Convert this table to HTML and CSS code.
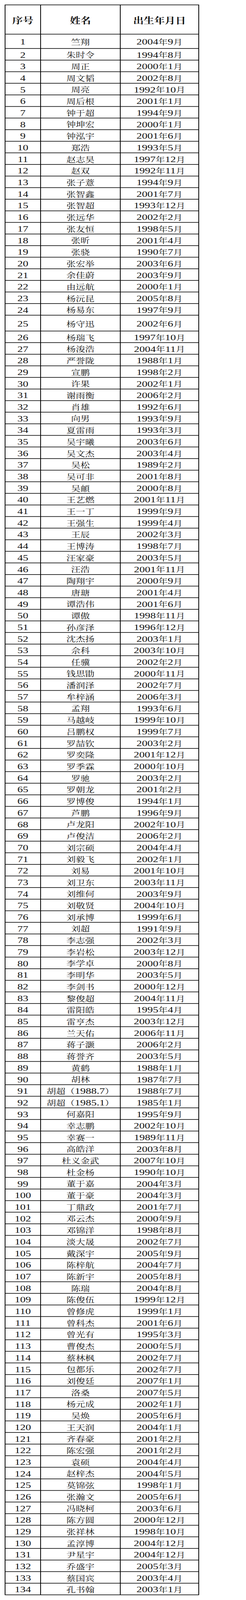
FILE: index.html
```html
<!DOCTYPE html>
<html lang="zh-CN">
<head>
<meta charset="utf-8">
<title>名单</title>
<link rel="stylesheet" href="styles.css">
</head>
<body>
<div class="page">
<div class="canvas">
<div class="sheet">
<div class="row head"><div>序号</div><div>姓名</div><div>出生年月日</div></div>
<div class="row first"><div>1</div><div>竺翔</div><div><span>2004</span>年<span>9</span>月</div></div>
<div class="row"><div>2</div><div>朱时令</div><div><span>1994</span>年<span>8</span>月</div></div>
<div class="row"><div>3</div><div>周正</div><div><span>2000</span>年<span>1</span>月</div></div>
<div class="row"><div>4</div><div>周文韬</div><div><span>2002</span>年<span>8</span>月</div></div>
<div class="row"><div>5</div><div>周亮</div><div><span>1992</span>年<span>10</span>月</div></div>
<div class="row"><div>6</div><div>周后根</div><div><span>2001</span>年<span>1</span>月</div></div>
<div class="row"><div>7</div><div>钟于超</div><div><span>1994</span>年<span>9</span>月</div></div>
<div class="row"><div>8</div><div>钟坤宏</div><div><span>2000</span>年<span>1</span>月</div></div>
<div class="row"><div>9</div><div>钟泓宇</div><div><span>2001</span>年<span>6</span>月</div></div>
<div class="row"><div>10</div><div>郑浩</div><div><span>1993</span>年<span>5</span>月</div></div>
<div class="row"><div>11</div><div>赵志昊</div><div><span>1997</span>年<span>12</span>月</div></div>
<div class="row"><div>12</div><div>赵双</div><div><span>1992</span>年<span>11</span>月</div></div>
<div class="row"><div>13</div><div>张子薏</div><div><span>1994</span>年<span>9</span>月</div></div>
<div class="row"><div>14</div><div>张智鑫</div><div><span>2001</span>年<span>7</span>月</div></div>
<div class="row"><div>15</div><div>张智超</div><div><span>1993</span>年<span>12</span>月</div></div>
<div class="row"><div>16</div><div>张远华</div><div><span>2002</span>年<span>2</span>月</div></div>
<div class="row"><div>17</div><div>张友恒</div><div><span>1998</span>年<span>5</span>月</div></div>
<div class="row"><div>18</div><div>张昕</div><div><span>2001</span>年<span>4</span>月</div></div>
<div class="row"><div>19</div><div>张骁</div><div><span>1990</span>年<span>7</span>月</div></div>
<div class="row"><div>20</div><div>张宏举</div><div><span>2003</span>年<span>6</span>月</div></div>
<div class="row"><div>21</div><div>余佳蔚</div><div><span>2003</span>年<span>9</span>月</div></div>
<div class="row"><div>22</div><div>由远航</div><div><span>2000</span>年<span>1</span>月</div></div>
<div class="row"><div>23</div><div>杨沅昆</div><div><span>2005</span>年<span>8</span>月</div></div>
<div class="row"><div>24</div><div>杨易东</div><div><span>1997</span>年<span>9</span>月</div></div>
<div class="row tall"><div>25</div><div>杨守迅</div><div><span>2002</span>年<span>6</span>月</div></div>
<div class="row"><div>26</div><div>杨瑞飞</div><div><span>1997</span>年<span>10</span>月</div></div>
<div class="row"><div>27</div><div>杨浚浩</div><div><span>2004</span>年<span>11</span>月</div></div>
<div class="row"><div>28</div><div>严誉陇</div><div><span>1988</span>年<span>1</span>月</div></div>
<div class="row"><div>29</div><div>宣鹏</div><div><span>1998</span>年<span>2</span>月</div></div>
<div class="row"><div>30</div><div>许果</div><div><span>2002</span>年<span>1</span>月</div></div>
<div class="row"><div>31</div><div>谢雨衡</div><div><span>2006</span>年<span>2</span>月</div></div>
<div class="row"><div>32</div><div>肖雄</div><div><span>1992</span>年<span>6</span>月</div></div>
<div class="row"><div>33</div><div>向男</div><div><span>1993</span>年<span>9</span>月</div></div>
<div class="row"><div>34</div><div>夏雷雨</div><div><span>1993</span>年<span>3</span>月</div></div>
<div class="row"><div>35</div><div>吴宇曦</div><div><span>2003</span>年<span>6</span>月</div></div>
<div class="row"><div>36</div><div>吴文杰</div><div><span>2003</span>年<span>4</span>月</div></div>
<div class="row"><div>37</div><div>吴松</div><div><span>1989</span>年<span>2</span>月</div></div>
<div class="row"><div>38</div><div>吴可非</div><div><span>2001</span>年<span>8</span>月</div></div>
<div class="row"><div>39</div><div>吴頔</div><div><span>2000</span>年<span>8</span>月</div></div>
<div class="row"><div>40</div><div>王艺燃</div><div><span>2001</span>年<span>11</span>月</div></div>
<div class="row"><div>41</div><div>王一丁</div><div><span>1999</span>年<span>9</span>月</div></div>
<div class="row"><div>42</div><div>王强生</div><div><span>1999</span>年<span>4</span>月</div></div>
<div class="row"><div>43</div><div>王辰</div><div><span>2002</span>年<span>3</span>月</div></div>
<div class="row"><div>44</div><div>王博涛</div><div><span>1998</span>年<span>7</span>月</div></div>
<div class="row"><div>45</div><div>汪家豪</div><div><span>2003</span>年<span>5</span>月</div></div>
<div class="row"><div>46</div><div>汪浩</div><div><span>2001</span>年<span>11</span>月</div></div>
<div class="row"><div>47</div><div>陶翔宇</div><div><span>2000</span>年<span>9</span>月</div></div>
<div class="row"><div>48</div><div>唐瑭</div><div><span>2001</span>年<span>4</span>月</div></div>
<div class="row"><div>49</div><div>谭浩伟</div><div><span>2001</span>年<span>6</span>月</div></div>
<div class="row"><div>50</div><div>谭傲</div><div><span>1998</span>年<span>11</span>月</div></div>
<div class="row"><div>51</div><div>孙彦泽</div><div><span>1996</span>年<span>12</span>月</div></div>
<div class="row"><div>52</div><div>沈杰扬</div><div><span>2003</span>年<span>1</span>月</div></div>
<div class="row"><div>53</div><div>佘科</div><div><span>2003</span>年<span>10</span>月</div></div>
<div class="row"><div>54</div><div>任骥</div><div><span>2002</span>年<span>2</span>月</div></div>
<div class="row"><div>55</div><div>钱思勖</div><div><span>2000</span>年<span>11</span>月</div></div>
<div class="row"><div>56</div><div>潘润泽</div><div><span>2002</span>年<span>7</span>月</div></div>
<div class="row"><div>57</div><div>牟梓涵</div><div><span>2006</span>年<span>3</span>月</div></div>
<div class="row"><div>58</div><div>孟翔</div><div><span>1993</span>年<span>6</span>月</div></div>
<div class="row"><div>59</div><div>马越岐</div><div><span>1999</span>年<span>10</span>月</div></div>
<div class="row"><div>60</div><div>吕鹏权</div><div><span>1999</span>年<span>7</span>月</div></div>
<div class="row"><div>61</div><div>罗喆钦</div><div><span>2003</span>年<span>2</span>月</div></div>
<div class="row"><div>62</div><div>罗奕隆</div><div><span>2001</span>年<span>12</span>月</div></div>
<div class="row"><div>63</div><div>罗季霖</div><div><span>2000</span>年<span>10</span>月</div></div>
<div class="row"><div>64</div><div>罗驰</div><div><span>2003</span>年<span>2</span>月</div></div>
<div class="row"><div>65</div><div>罗朝龙</div><div><span>2001</span>年<span>2</span>月</div></div>
<div class="row"><div>66</div><div>罗博俊</div><div><span>1994</span>年<span>1</span>月</div></div>
<div class="row"><div>67</div><div>芦鹏</div><div><span>1996</span>年<span>9</span>月</div></div>
<div class="row"><div>68</div><div>卢龙阳</div><div><span>2002</span>年<span>10</span>月</div></div>
<div class="row"><div>69</div><div>卢俊洁</div><div><span>2006</span>年<span>2</span>月</div></div>
<div class="row"><div>70</div><div>刘宗硕</div><div><span>2004</span>年<span>4</span>月</div></div>
<div class="row"><div>71</div><div>刘毅飞</div><div><span>2002</span>年<span>1</span>月</div></div>
<div class="row"><div>72</div><div>刘易</div><div><span>2001</span>年<span>10</span>月</div></div>
<div class="row"><div>73</div><div>刘卫东</div><div><span>2003</span>年<span>11</span>月</div></div>
<div class="row"><div>74</div><div>刘维何</div><div><span>2003</span>年<span>9</span>月</div></div>
<div class="row"><div>75</div><div>刘敬贤</div><div><span>2004</span>年<span>10</span>月</div></div>
<div class="row"><div>76</div><div>刘承博</div><div><span>1999</span>年<span>6</span>月</div></div>
<div class="row"><div>77</div><div>刘超</div><div><span>1991</span>年<span>9</span>月</div></div>
<div class="row"><div>78</div><div>李志强</div><div><span>2002</span>年<span>3</span>月</div></div>
<div class="row"><div>79</div><div>李岩松</div><div><span>2003</span>年<span>12</span>月</div></div>
<div class="row"><div>80</div><div>李学卓</div><div><span>2000</span>年<span>8</span>月</div></div>
<div class="row"><div>81</div><div>李明华</div><div><span>2003</span>年<span>5</span>月</div></div>
<div class="row"><div>82</div><div>李剑书</div><div><span>2000</span>年<span>12</span>月</div></div>
<div class="row"><div>83</div><div>黎俊超</div><div><span>2004</span>年<span>11</span>月</div></div>
<div class="row"><div>84</div><div>雷阳皓</div><div><span>1995</span>年<span>4</span>月</div></div>
<div class="row"><div>85</div><div>雷亨杰</div><div><span>2003</span>年<span>12</span>月</div></div>
<div class="row"><div>86</div><div>兰天佑</div><div><span>2006</span>年<span>11</span>月</div></div>
<div class="row"><div>87</div><div>蒋子灏</div><div><span>2006</span>年<span>2</span>月</div></div>
<div class="row"><div>88</div><div>蒋誉齐</div><div><span>2003</span>年<span>5</span>月</div></div>
<div class="row"><div>89</div><div>黄鹤</div><div><span>1988</span>年<span>1</span>月</div></div>
<div class="row"><div>90</div><div>胡林</div><div><span>1987</span>年<span>7</span>月</div></div>
<div class="row"><div>91</div><div>胡超（<span>1988.7</span>）</div><div><span>1988</span>年<span>7</span>月</div></div>
<div class="row"><div>92</div><div>胡超（<span>1985.1</span>）</div><div><span>1985</span>年<span>1</span>月</div></div>
<div class="row"><div>93</div><div>何嘉阳</div><div><span>1995</span>年<span>9</span>月</div></div>
<div class="row"><div>94</div><div>幸志鹏</div><div><span>2002</span>年<span>10</span>月</div></div>
<div class="row"><div>95</div><div>幸赛一</div><div><span>1989</span>年<span>11</span>月</div></div>
<div class="row"><div>96</div><div>高皓洋</div><div><span>2003</span>年<span>8</span>月</div></div>
<div class="row"><div>97</div><div>杜义金武</div><div><span>2007</span>年<span>10</span>月</div></div>
<div class="row"><div>98</div><div>杜金杨</div><div><span>1990</span>年<span>10</span>月</div></div>
<div class="row"><div>99</div><div>董于嘉</div><div><span>2004</span>年<span>3</span>月</div></div>
<div class="row"><div>100</div><div>董于豪</div><div><span>2004</span>年<span>3</span>月</div></div>
<div class="row"><div>101</div><div>丁鼎政</div><div><span>2001</span>年<span>7</span>月</div></div>
<div class="row"><div>102</div><div>邓云杰</div><div><span>2000</span>年<span>9</span>月</div></div>
<div class="row"><div>103</div><div>邓锦洋</div><div><span>1998</span>年<span>8</span>月</div></div>
<div class="row"><div>104</div><div>淡大晟</div><div><span>2002</span>年<span>7</span>月</div></div>
<div class="row"><div>105</div><div>戴深宇</div><div><span>2005</span>年<span>9</span>月</div></div>
<div class="row"><div>106</div><div>陈梓航</div><div><span>2004</span>年<span>7</span>月</div></div>
<div class="row"><div>107</div><div>陈新宇</div><div><span>2005</span>年<span>8</span>月</div></div>
<div class="row"><div>108</div><div>陈瑞</div><div><span>2004</span>年<span>8</span>月</div></div>
<div class="row"><div>109</div><div>陈俊伍</div><div><span>1999</span>年<span>12</span>月</div></div>
<div class="row"><div>110</div><div>曾修虎</div><div><span>1999</span>年<span>1</span>月</div></div>
<div class="row"><div>111</div><div>曾科杰</div><div><span>2001</span>年<span>6</span>月</div></div>
<div class="row"><div>112</div><div>曾光有</div><div><span>1995</span>年<span>3</span>月</div></div>
<div class="row"><div>113</div><div>曹俊杰</div><div><span>2000</span>年<span>5</span>月</div></div>
<div class="row"><div>114</div><div>蔡林枫</div><div><span>2002</span>年<span>7</span>月</div></div>
<div class="row"><div>115</div><div>包都乐</div><div><span>2002</span>年<span>7</span>月</div></div>
<div class="row"><div>116</div><div>刘俊廷</div><div><span>2007</span>年<span>1</span>月</div></div>
<div class="row"><div>117</div><div>洛桑</div><div><span>2007</span>年<span>5</span>月</div></div>
<div class="row"><div>118</div><div>杨元成</div><div><span>2002</span>年<span>1</span>月</div></div>
<div class="row"><div>119</div><div>吴焕</div><div><span>2005</span>年<span>6</span>月</div></div>
<div class="row"><div>120</div><div>王天润</div><div><span>2004</span>年<span>1</span>月</div></div>
<div class="row"><div>121</div><div>齐春豪</div><div><span>2001</span>年<span>2</span>月</div></div>
<div class="row"><div>122</div><div>陈宏强</div><div><span>2001</span>年<span>2</span>月</div></div>
<div class="row"><div>123</div><div>袁硕</div><div><span>2004</span>年<span>4</span>月</div></div>
<div class="row"><div>124</div><div>赵梓杰</div><div><span>2004</span>年<span>5</span>月</div></div>
<div class="row"><div>125</div><div>莫锦弦</div><div><span>1998</span>年<span>1</span>月</div></div>
<div class="row"><div>126</div><div>张瀚文</div><div><span>2005</span>年<span>6</span>月</div></div>
<div class="row"><div>127</div><div>冯晓柯</div><div><span>2003</span>年<span>6</span>月</div></div>
<div class="row"><div>128</div><div>陈方圆</div><div><span>2000</span>年<span>12</span>月</div></div>
<div class="row"><div>129</div><div>张祥林</div><div><span>1998</span>年<span>10</span>月</div></div>
<div class="row"><div>130</div><div>孟淳博</div><div><span>2004</span>年<span>12</span>月</div></div>
<div class="row"><div>131</div><div>尹星宇</div><div><span>2004</span>年<span>12</span>月</div></div>
<div class="row"><div>132</div><div>乔盛宇</div><div><span>2005</span>年<span>3</span>月</div></div>
<div class="row"><div>133</div><div>蔡国宾</div><div><span>2003</span>年<span>4</span>月</div></div>
<div class="row"><div>134</div><div>孔书翰</div><div><span>2003</span>年<span>1</span>月</div></div>
</div>
</div>
</div>
</body>
</html>
```

FILE: styles.css
```css
html, body {
  margin: 0;
  padding: 0;
  background: #fff;
}

body {
  color: #111;
  font-family: "Noto Serif CJK SC", "Noto Sans CJK SC", serif;
}

/* the page is drawn on a 5244px-tall sheet and fitted to the window height */
.page {
  height: 100vh;
  overflow: hidden;
}

.canvas {
  padding: 15px 0 0 12px;
  transform-origin: 0 0;
  transform: scaleY(tan(atan2(100vh, 5244px)));
}

/* black background + 2px gaps draw the grid lines */
.sheet {
  display: flex;
  flex-direction: column;
  gap: 2px;
  width: 494px;
  padding: 2px;
  background: #000;
}

.row {
  display: grid;
  grid-template-columns: 89px 202px 199px;
  grid-template-rows: minmax(0, 1fr);
  gap: 2px;
  height: 36px;
  flex: none;
}

.row.head { height: 94px; }
.row.first { height: 45px; }
.row.tall { height: 50px; }

.row > div {
  background: #fff;
  display: flex;
  align-items: center;
  justify-content: center;
  white-space: nowrap;
  box-sizing: border-box;
  padding-top: 3px;
  font-size: 24px;
  line-height: 28px;
}

.row > div span,
.row > div:first-child {
  font-family: "Liberation Serif", "Times New Roman", serif;
  font-size: 28px;
}

.row.head > div {
  font-family: "Noto Serif CJK SC", "Noto Sans CJK SC", serif;
  font-size: 27px;
  font-weight: 700;
  line-height: 34px;
  padding-top: 3px;
}
```
